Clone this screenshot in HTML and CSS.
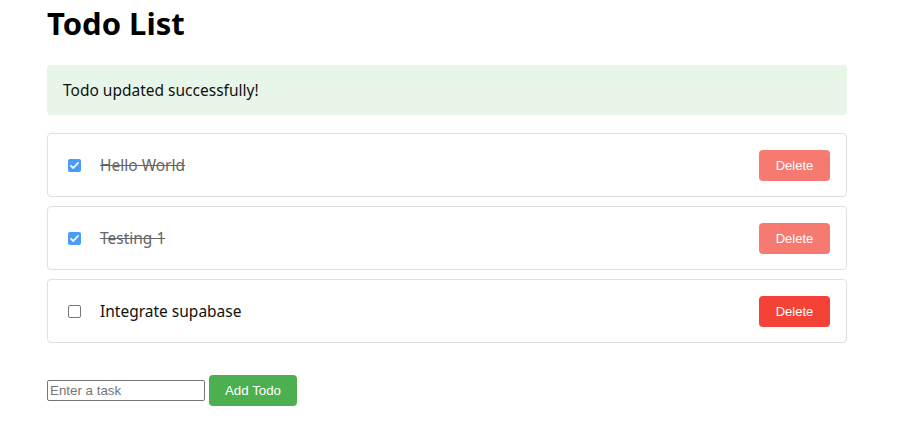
FILE: index.html
```html
<!DOCTYPE html>
<html>
<head>
<meta charset="utf-8">
<link rel="stylesheet" href="styles.css">
</head>
<body>
<div class="app">
  <h1 class="title">Todo List</h1>
  <div class="alert">Todo updated successfully!</div>
  <ul class="list">
    <li class="item done">
      <input type="checkbox" class="check" checked>
      <span class="text">Hello World</span>
      <button class="delete">Delete</button>
    </li>
    <li class="item done">
      <input type="checkbox" class="check" checked>
      <span class="text">Testing 1</span>
      <button class="delete">Delete</button>
    </li>
    <li class="item">
      <input type="checkbox" class="check">
      <span class="text">Integrate supabase</span>
      <button class="delete">Delete</button>
    </li>
  </ul>
  <form class="add">
    <input type="text" class="task" placeholder="Enter a task">
    <button type="button" class="add-btn">Add Todo</button>
  </form>
</div>
</body>
</html>
```
FILE: styles.css
```css
html, body {
  margin: 0;
  padding: 0;
  background: #fff;
}
body {
  font-family: "Noto Sans", "Open Sans", sans-serif;
  color: #111;
}
.app {
  width: 800px;
  margin: 0 auto 0 47px;
  padding-top: 1px;
}
.title {
  font-size: 31px;
  font-weight: 700;
  margin: -2px 0 18px 0;
  line-height: 48px;
  color: #000;
}
.alert {
  background: #e8f5e9;
  border-radius: 4px;
  height: 50px;
  box-sizing: border-box;
  padding: 0 16px;
  display: flex;
  align-items: center;
  font-size: 15.5px;
  margin-bottom: 18px;
}
.list {
  list-style: none;
  margin: 0;
  padding: 0;
  display: flex;
  flex-direction: column;
  gap: 9px;
}
.item {
  display: flex;
  align-items: center;
  height: 64px;
  box-sizing: border-box;
  border: 1px solid #e0e0e0;
  border-radius: 4px;
  padding: 0 16px;
}
.check {
  -webkit-appearance: none;
  appearance: none;
  width: 13px;
  height: 13px;
  margin: 3px 3px 3px 4px;
  box-sizing: border-box;
  border: 1px solid #767676;
  border-radius: 2px;
  background: #fff;
}
.check:checked {
  border: none;
  background: #4a9cf8 url("data:image/svg+xml;utf8,<svg xmlns='http://www.w3.org/2000/svg' width='13' height='13' viewBox='0 0 13 13'><path d='M3 6.8 L5.3 9 L10 4' fill='none' stroke='white' stroke-width='1.8' stroke-linecap='round' stroke-linejoin='round'/></svg>") no-repeat center;
}
.text {
  flex: 1;
  margin-left: 16px;
  font-size: 15.5px;
  color: #111;
}
.done .text {
  text-decoration: line-through;
  color: #666;
}
.delete {
  background: #f44336;
  color: #fff;
  border: none;
  border-radius: 4px;
  font-family: "Liberation Sans", Arial, sans-serif;
  font-size: 13px;
  width: 71px;
  height: 31px;
  padding: 0;
  cursor: pointer;
}
.done .delete {
  opacity: 0.7;
}
.add {
  display: flex;
  align-items: center;
  gap: 4px;
  margin-top: 32px;
}
.task {
  width: 158px;
  height: 21px;
  box-sizing: border-box;
  margin: 0;
  font-family: "Liberation Sans", Arial, sans-serif;
  font-size: 13.33px;
  padding: 1px 2px;
  border: 1px solid #767676;
  border-radius: 2px;
}
.task::placeholder {
  color: #757575;
}
.add-btn {
  background: #4caf50;
  color: #fff;
  border: none;
  border-radius: 4px;
  font-family: "Liberation Sans", Arial, sans-serif;
  font-size: 13.33px;
  width: 88px;
  height: 31px;
  padding: 0;
}
```
